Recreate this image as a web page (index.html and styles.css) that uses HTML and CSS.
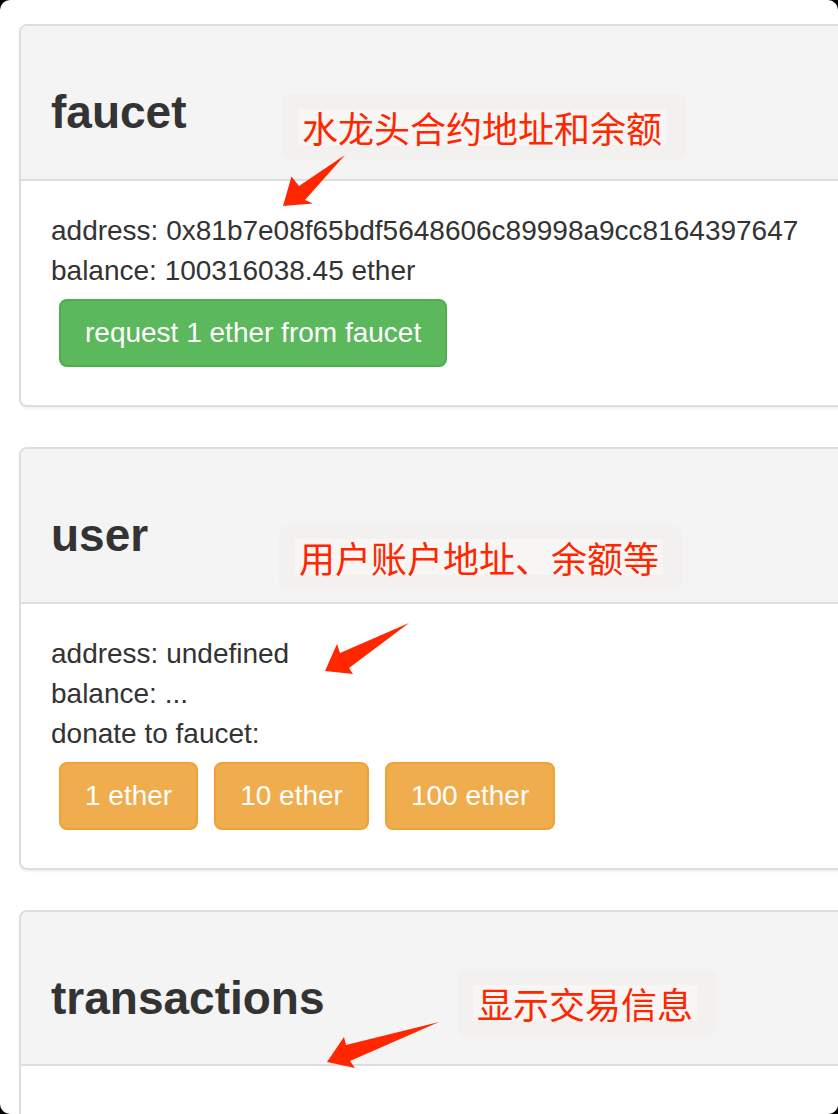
FILE: index.html
```html
<!DOCTYPE html>
<html lang="en">
<head>
<meta charset="utf-8">
<title>faucet</title>
<link rel="stylesheet" href="styles.css">
</head>
<body>
<div class="window">
  <div class="panel">
    <div class="panel-heading"><h3>faucet</h3></div>
    <div class="panel-body">
      <div>address: 0x81b7e08f65bdf5648606c89998a9cc8164397647</div>
      <div>balance: 100316038.45 ether</div>
      <div class="btns"><button class="btn btn-success">request 1 ether from faucet</button></div>
    </div>
  </div>
  <div class="panel">
    <div class="panel-heading"><h3>user</h3></div>
    <div class="panel-body">
      <div>address: undefined</div>
      <div>balance: ...</div>
      <div>donate to faucet:</div>
      <div class="btns">
        <button class="btn btn-warning">1 ether</button>
        <button class="btn btn-warning">10 ether</button>
        <button class="btn btn-warning">100 ether</button>
      </div>
    </div>
  </div>
  <div class="panel">
    <div class="panel-heading"><h3>transactions</h3></div>
    <div class="panel-body"></div>
  </div>

  <div class="note note-1"><span>水龙头合约地址和余额</span></div>
  <div class="note note-2"><span>用户账户地址、余额等</span></div>
  <div class="note note-3"><span>显示交易信息</span></div>

  <svg class="arrows" width="838" height="1114" viewBox="0 0 838 1114">
    <polygon points="345,155 299,186 291.5,176.5 283,206 313,203.5 305,200"/>
    <polygon points="409,623 340,653 337,644 325,671 353,674 349,668"/>
    <polygon points="439,1022 346,1045 344,1037 327,1062 355,1068 350,1061"/>
  </svg>
</div>
</body>
</html>
```

FILE: styles.css
```css
html {
  background: #000;
}

body {
  margin: 0;
}

.window {
  position: relative;
  width: 838px;
  height: 1114px;
  box-sizing: border-box;
  padding: 24px 0 0 19px;
  background: #fff;
  border-radius: 10px;
  overflow: hidden;
  font-family: "Liberation Sans", Arial, Helvetica, sans-serif;
  color: #333;
}

.panel {
  width: 880px;
  margin-bottom: 40px;
  background: #fff;
  border: 2px solid #ddd;
  border-radius: 8px;
  box-shadow: 0 2px 2px rgba(0, 0, 0, 0.05);
}

.panel-heading {
  padding: 20px 30px;
  background: #f4f4f4;
  border-bottom: 2px solid #ddd;
  border-radius: 6px 6px 0 0;
}

.panel-heading h3 {
  margin: 40px 0 20px;
  font-size: 46px;
  line-height: 52.8px;
  font-weight: bold;
  color: #333;
}

.panel-body {
  padding: 30px;
  font-size: 28px;
  line-height: 40px;
}

.btns {
  display: flex;
}

.btn {
  margin: 8px;
  padding: 12px 24px;
  border: 2px solid;
  border-radius: 8px;
  font-family: inherit;
  font-size: 28px;
  line-height: 40px;
  color: #fff;
  cursor: pointer;
}

.btn-success {
  background: #5cb85c;
  border-color: #4cae4c;
}

.btn-warning {
  background: #f0ad4e;
  border-color: #eea236;
}

.note {
  position: absolute;
  display: flex;
  align-items: center;
  box-sizing: border-box;
  padding: 0 16px;
  background: #f2f1f0;
  border-radius: 8px;
  font-family: "Noto Sans CJK SC", "Noto Sans", sans-serif;
  font-size: 36px;
  line-height: 36px;
  color: #ff2600;
}

.note span {
  padding: 0 4px;
  background: #f7f6f5;
  white-space: nowrap;
}

.note-1 {
  left: 282px;
  top: 94px;
  width: 405px;
  height: 66px;
}

.note-2 {
  left: 279px;
  top: 525px;
  width: 404px;
  height: 64px;
}

.note-3 {
  left: 457px;
  top: 969px;
  width: 259px;
  height: 68px;
}

.arrows {
  position: absolute;
  left: 0;
  top: 0;
  pointer-events: none;
  fill: #ff2600;
}
```
